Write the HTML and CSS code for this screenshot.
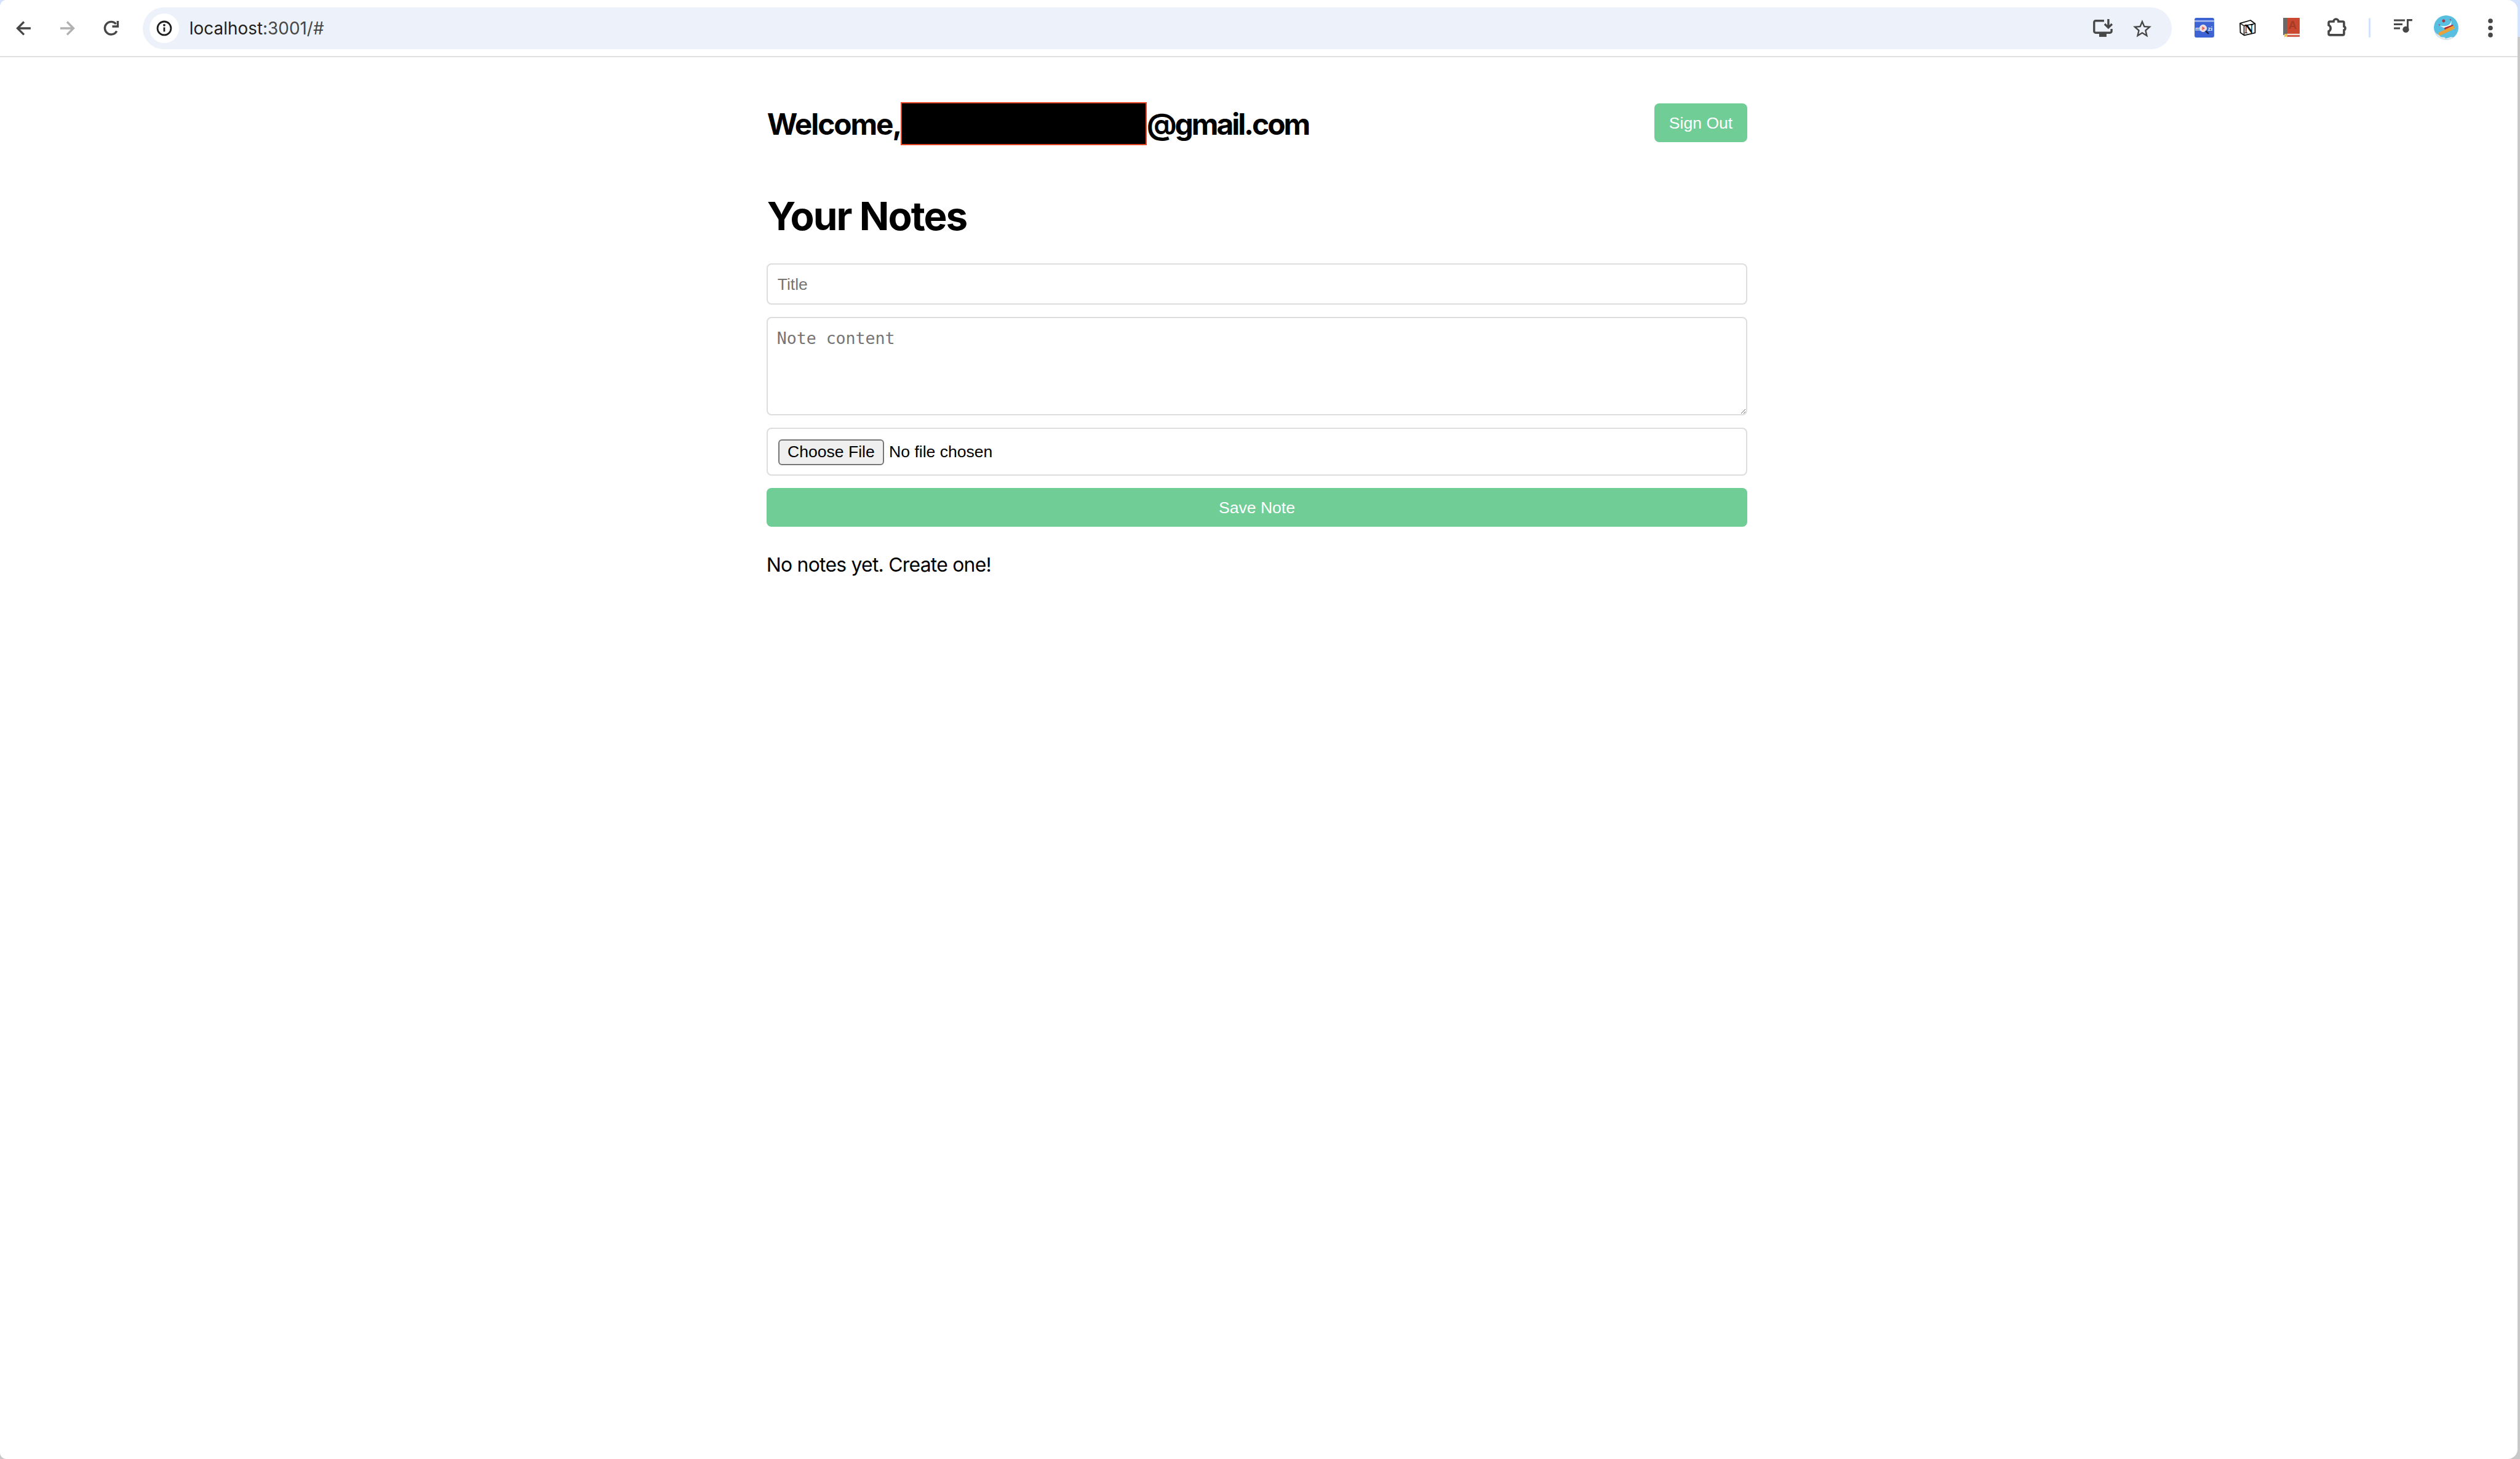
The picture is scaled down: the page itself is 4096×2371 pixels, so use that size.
FILE: index.html
```html
<!DOCTYPE html>
<html lang="en">
<head>
<meta charset="utf-8">
<title>Notes</title>
<link rel="stylesheet" href="styles.css">
</head>
<body>
<div class="window">
  <header class="toolbar">
    <nav class="nav">
      <svg class="nav-icon" viewBox="0 0 24 24"><path class="s-dark" d="M24 12H3M13 1.500 2.500 12 13 22.500"/></svg>
      <svg class="nav-icon" viewBox="0 0 24 24"><path class="s-faint" d="M0 12h21M11 1.500 21.500 12 11 22.500"/></svg>
      <svg class="nav-icon" viewBox="0 0 24 24"><path class="s-dark" d="M20.800 16.500A10.300 10.300 0 1 1 19.500 5"/><path class="s-dark s-miter" d="M22.500 0v9H13.500"/></svg>
    </nav>
    <div class="omnibox">
      <span class="chip"><svg class="info" viewBox="0 0 26 26"><circle class="s-ink" cx="13" cy="13" r="11"/><path class="s-ink" d="M13 11.500v7"/><circle class="f-ink" cx="13" cy="7.800" r="1.900"/></svg></span>
      <span class="url">localhost<span class="url-dim">:3001/#</span></span>
      <svg class="install" viewBox="0 0 32 30"><path class="s-dark" d="M18 2.700H4.500a2.500 2.500 0 0 0-2.700 2.500v14.600a2.500 2.500 0 0 0 2.700 2.500h23a2.500 2.500 0 0 0 2.700-2.500V16"/><rect class="f-dark" x="10" y="24" width="12" height="5"/><path class="s-dark" d="M25 0v13M19 8l6 6 6-6"/></svg>
      <svg class="star" viewBox="2 2 20 19"><path class="f-dark" d="M22 9.240l-7.190-.62L12 2 9.190 8.630 2 9.240l5.460 4.730L5.820 21 12 17.270 18.180 21l-1.630-7.030L22 9.240zM12 15.400l-3.760 2.270 1-4.280-3.320-2.880 4.380-.38L12 6.100l1.710 4.040 4.380.38-3.320 2.880 1 4.280L12 15.400z"/></svg>
    </div>
    <svg class="ext-moji" viewBox="0 0 32 32">
      <rect class="moji-bg" width="32" height="32" rx="3"/>
      <rect class="moji-line" y="4" width="32" height="2.500"/>
      <text class="moji-text" x="1" y="21">m</text>
      <text class="moji-text" x="21.500" y="21">zi</text>
      <circle class="moji-lens" cx="14" cy="17" r="5.500"/>
      <path class="moji-play" d="M12.500 14v6l4.500-3z"/>
      <path class="moji-handle" d="M18 21.500l5 4.500"/>
    </svg>
    <svg class="ext-notion" viewBox="0 0 27 26">
      <path class="notion-cube" d="M1 6 18 1l7.500 5.500v15L8 25.500 1.500 21z"/>
      <path class="notion-line" d="M1 6l6.500 4 18-3.500M7.500 10v15.500"/>
      <text class="notion-n" x="8" y="22">N</text>
    </svg>
    <svg class="ext-book" viewBox="0 0 27 32">
      <rect class="book-cover" x="5" width="22" height="26"/>
      <rect class="book-spine" width="6" height="28"/>
      <text class="book-a" x="8.500" y="18">A</text>
      <rect class="book-page" x="6" y="26" width="21" height="2"/>
      <rect class="book-edge" x="6" y="28" width="21" height="3"/>
      <path class="book-mark" d="M2 26h5v6l-2.500-2L2 32z"/>
    </svg>
    <svg class="ext-puzzle" viewBox="0 0 32 32"><path class="s-puzzle" d="M2 10a2 2 0 0 1 2-2h6a4 4 0 0 1 8 0h7a2 2 0 0 1 2 2v6a3.200 3.200 0 0 1 0 6v6a2 2 0 0 1-2 2H4a2 2 0 0 1-2-2v-4a5.500 5.500 0 0 0 0-10z"/></svg>
    <span class="divider"></span>
    <svg class="queue" viewBox="0 0 30 23"><path class="f-dark" d="M0 0.500h18v3H0zM0 7h14v3H0zM0 13.500h10v3H0zM21 0h9v3.200h-6V17h-3z"/><circle class="f-dark" cx="19.500" cy="17" r="5.200"/></svg>
    <svg class="avatar" viewBox="0 0 40 40">
      <circle class="av-sky" cx="20" cy="20" r="20"/>
      <path class="av-cloud" d="M0 22c2 6 5 9 9 10l2 3 7 1 2 4c-9 0-17-6-20-18zM19 38l9-3 4 1c-3 3-8 4-13 4z"/>
      <path class="av-arm" d="M8 16c5 2 13 3 18-2l3-5-1 7-6 4-6 0z"/>
      <path class="av-body" d="M17 20l14-5 2 5-15 5z"/>
      <path class="av-board" d="M8 31 33 19"/>
      <circle class="av-head" cx="16" cy="9" r="2.500"/>
      <circle class="av-head" cx="9" cy="15.500" r="1"/>
      <circle class="av-head" cx="27" cy="7" r="1"/>
    </svg>
    <svg class="menu" viewBox="0 0 8 31"><circle class="f-dark" cx="4" cy="4" r="3.800"/><circle class="f-dark" cx="4" cy="15.500" r="3.800"/><circle class="f-dark" cx="4" cy="27" r="3.800"/></svg>
  </header>
  <main class="page">
    <div class="content">
      <div class="top">
        <h2 class="welcome">Welcome,<span class="redacted"></span><span class="email-end">@gmail.com</span></h2>
        <button class="btn btn-signout" type="button">Sign Out</button>
      </div>
      <h1 class="title">Your Notes</h1>
      <form class="form">
        <input class="field field-title" type="text" placeholder="Title">
        <textarea class="field field-content" placeholder="Note content"></textarea>
        <input class="field field-file" type="file">
        <button class="btn btn-save" type="button">Save Note</button>
      </form>
      <p class="empty">No notes yet. Create one!</p>
    </div>
  </main>
</div>
</body>
</html>
```
FILE: styles.css
```css
html {
  margin: 0;
  overflow: hidden;
  background: linear-gradient(#d3e3fd 0 60px, #c8c8c8 60px);
}
body {
  zoom: 0.99659;
  margin: 0;
  width: 4110px;
  height: 2379px;
  overflow: hidden;
}
.window {
  width: 4106px;
  height: 2379px;
  background: #fff;
  border-radius: 10px 16px 16px 10px;
  overflow: hidden;
}
.toolbar {
  height: 93px;
  box-sizing: border-box;
  border-bottom: 2.100px solid #e1e1e1;
  display: flex;
  align-items: center;
  padding-left: 26px;
}
.nav { display: flex; gap: 48px; }
.nav-icon { width: 24px; height: 24px; display: block; margin-top: 1px; }
svg { flex: none; overflow: visible; }
.s-dark, .s-faint, .s-ink, .s-puzzle { fill: none; stroke-width: 3.4; }
.s-dark { stroke: #474747; }
.s-miter { stroke-linejoin: miter; }
.s-faint { stroke: #b1b1b1; }
.s-ink { stroke: #1f1f1f; stroke-width: 2.8; }
.s-puzzle { stroke: #474747; stroke-width: 3.6; }
.f-dark { fill: #474747; }
.f-ink { fill: #1f1f1f; }

.omnibox {
  margin-left: 39px;
  width: 3309px;
  height: 68px;
  margin-top: 1px;
  box-sizing: border-box;
  border-radius: 34px;
  background: #edf2fa;
  display: flex;
  align-items: center;
  padding: 0 33px 0 11px;
}
.chip {
  width: 48px;
  height: 48px;
  border-radius: 50%;
  background: #fff;
  display: flex;
  align-items: center;
  justify-content: center;
  flex: none;
}
.info { width: 26px; height: 26px; }
.url {
  margin-left: 17px;
  flex: 1;
  font: 400 28px Inter, "Liberation Sans", sans-serif;
  color: #1f1f1f;
}
.url-dim { color: #474747; }
.install { width: 32px; height: 30px; }
.star { width: 30px; height: 28.500px; margin-left: 33px; }

.ext-moji { width: 32px; height: 32px; margin-left: 37px; }
.moji-bg { fill: #3d63d4; }
.moji-line { fill: #a9bdf0; }
.moji-text { font: 700 10px "Liberation Sans", sans-serif; fill: #e6ecfb; }
.moji-lens { fill: #f3d7d7; stroke: #f7f1f1; stroke-width: 1; }
.moji-play { fill: #dd5a50; }
.moji-handle { stroke: #1c2340; stroke-width: 2.400; fill: none; }

.ext-notion { width: 27px; height: 26px; margin-left: 42px; }
.notion-cube { fill: #fff; stroke: #111; stroke-width: 1.800; stroke-linejoin: round; }
.notion-line { fill: none; stroke: #111; stroke-width: 1.500; }
.notion-n { font: 700 20px "Liberation Serif", serif; fill: #000; }

.ext-book { width: 27px; height: 32px; margin-left: 44px; }
.book-cover { fill: #c9482f; }
.book-spine { fill: #6a6a6a; }
.book-a { font: 700 19px "Liberation Sans", sans-serif; fill: #a83a28; }
.book-page { fill: #f2e7e0; }
.book-edge { fill: #cf5a46; }
.book-mark { fill: #e8c04a; }

.ext-puzzle { width: 32px; height: 32px; margin-left: 45px; margin-top: -5px; }
.divider { width: 3px; height: 32px; background: #d3e3fd; margin-left: 35px; flex: none; border-radius: 2px; }
.queue { width: 30px; height: 23px; margin-left: 38px; margin-top: -5px; }
.avatar { width: 40px; height: 40px; margin-left: 36px; }
.av-sky { fill: #58bfe0; }
.av-cloud { fill: #e4e8ea; }
.av-arm { fill: #fff; }
.av-body { fill: #b02c2e; }
.av-board { stroke: #e9a23a; stroke-width: 5.500; fill: none; }
.av-head { fill: #a83a40; }
.menu { width: 8px; height: 31px; margin-left: 48px; }

.page { padding: 74px 6px 0 0; }
.content {
  width: 1600px;
  margin: 0 auto;
  font-family: Inter, "Liberation Sans", sans-serif;
  color: #000;
}
.top { display: flex; justify-content: space-between; align-items: flex-start; }
.welcome {
  margin: 0;
  display: flex;
  align-items: flex-start;
  font-size: 48px;
  line-height: 74px;
  font-weight: 700;
  letter-spacing: -2.100px;
  padding-left: 1px;
}
.email-end { letter-spacing: -3px; }
.redacted {
  width: 401px;
  height: 70px;
  box-sizing: border-box;
  background: #000;
  border: 2.100px solid #e8482a;
  flex: none;
}
.btn {
  border: 0;
  border-radius: 8px;
  background: #6fcd95;
  color: #fff;
  font: 400 26.670px "Liberation Sans", sans-serif;
  height: 63px;
  padding: 1px 0 0;
}
.btn-signout { width: 152px; margin-top: 2px; }
.title {
  margin: 75px 0 42px;
  padding-left: 1px;
  font-size: 64px;
  line-height: 72px;
  font-weight: 700;
  letter-spacing: -1.900px;
}
.form { display: flex; flex-direction: column; gap: 20px; }
.field {
  display: block;
  width: 100%;
  box-sizing: border-box;
  margin: 0;
  border: 2.100px solid #ddd;
  border-radius: 8px;
  background: #fff;
  outline: none;
  color: #000;
}
.field::placeholder { color: #757575; }
.field-title {
  height: 67px;
  padding: 2px 16px 0;
  font: 400 26.670px "Liberation Sans", sans-serif;
}
.field-content {
  height: 160px;
  padding: 17px 15px 15px;
  font: 400 26.670px/32px "DejaVu Sans Mono", "Liberation Mono", monospace;
}
.field-file {
  height: 79px;
  padding: 17px 16px 15px 17px;
  font: 400 26.670px/43px "Liberation Sans", sans-serif;
}
.field-file::file-selector-button {
  width: 173px;
  height: 43px;
  box-sizing: border-box;
  margin: 0 8px 0 0;
  padding: 0;
  border: 2.100px solid #767676;
  border-radius: 6px;
  background: #efefef;
  color: #000;
  font: 400 26.670px "Liberation Sans", sans-serif;
}
.btn-save { width: 100%; display: block; }
.empty {
  margin: 43px 0 0;
  font-size: 32px;
  line-height: 38px;
  letter-spacing: -0.750px;
}
```
